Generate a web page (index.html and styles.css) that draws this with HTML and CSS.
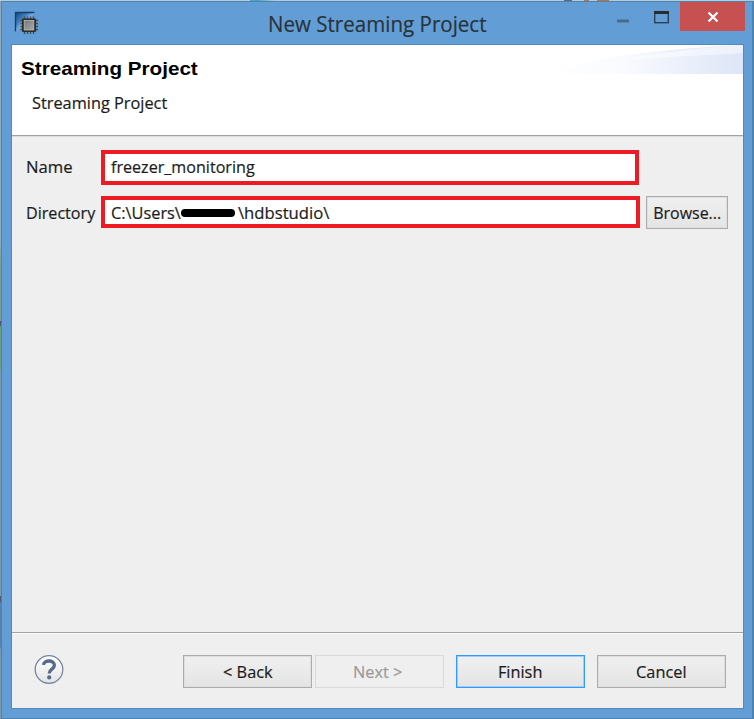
FILE: index.html
```html
<!DOCTYPE html>
<html lang="en">
<head>
<meta charset="utf-8">
<title>New Streaming Project</title>
<link rel="stylesheet" href="styles.css">
</head>
<body>
<div class="desktop">
  <div class="behind-top"></div>
  <div class="behind-left"></div>
  <section class="window">
    <header class="titlebar">
      <svg class="app-icon" width="25" height="25" viewBox="0 0 25 25">
        <defs>
          <linearGradient id="blue" x1="0" y1="0" x2=".6" y2=".6"><stop offset="0" stop-color="#0c3f74"/><stop offset=".55" stop-color="#3f7fbd"/><stop offset="1" stop-color="#a5cdf0"/></linearGradient>
          <linearGradient id="chip" x1="0" y1="0" x2="1" y2="1"><stop offset="0" stop-color="#777"/><stop offset="1" stop-color="#aaa"/></linearGradient>
        </defs>
        <path d="M1 2H21.500L1 22.500Z" fill="url(#blue)"/>
        <path d="M1.500 21.500V2.500H20.500" fill="none" stroke="#123f70" stroke-width="1.300"/>
        <path d="M10.500 6.500V24M13.500 6.500V24M16.500 6.500V24M19.500 6.500V24M6.500 10.500H24M6.500 13.500H24M6.500 16.500H24M6.500 19.500H24" stroke="#454b50" stroke-width="1.300"/>
        <rect x="8" y="8.500" width="14" height="13.500" rx="1" fill="#2c2c2c"/>
        <rect x="10.200" y="10.500" width="9.600" height="9.500" fill="url(#chip)" stroke="#bbb" stroke-width=".8"/>
      </svg>
      <h1 class="title"><span class="t">New Streaming Project</span></h1>
      <div class="controls">
        <svg width="68" height="30" viewBox="0 0 68 30">
          <rect x="5" y="17.500" width="12" height="3" fill="#466d91"/>
          <rect x="42.700" y="9.700" width="13.600" height="11" fill="none" stroke="#2b4054" stroke-width="1.400"/>
          <rect x="42" y="9" width="15" height="3" fill="#272c30"/>
        </svg>
        <span class="close"><svg width="65" height="29" viewBox="0 0 65 29"><path d="M28.500 10.500L37.500 19.500M37.500 10.500L28.500 19.500" stroke="#fff" stroke-width="2.300"/></svg></span>
      </div>
    </header>
    <main class="client">
      <div class="banner">
        <h2 class="heading"><span class="t">Streaming Project</span></h2>
        <p class="sub"><span class="t">Streaming Project</span></p>
        <svg class="swoosh" width="200" height="29" viewBox="0 0 200 29">
          <defs><linearGradient id="haze"><stop offset="0" stop-color="#fff"/><stop offset=".4" stop-color="#f9fbfe"/><stop offset="1" stop-color="#dde5f7"/></linearGradient></defs>
          <path d="M0 29Q75 5 200 0V29Z" fill="url(#haze)"/>
          <path d="M70 16Q140 4 200 0V8Q140 11 70 16Z" fill="#fff" opacity=".45"/>
        </svg>
      </div>
      <form class="form">
        <div class="row name-row">
          <label class="label"><span class="t name">Name</span></label>
          <div class="field"><span class="t file">freezer_monitoring</span></div>
        </div>
        <div class="row dir-row">
          <label class="label"><span class="t directory">Directory</span></label>
          <div class="field"><span class="t users">C:\Users\</span><i class="redaction"></i><span class="t studio">\hdbstudio\</span></div>
          <span class="button browse"><span class="t">Browse...</span></span>
        </div>
      </form>
      <footer class="footer">
        <svg class="help" width="30" height="30" viewBox="0 0 30 30">
          <defs><linearGradient id="ball" x2="0" y2="1"><stop offset="0" stop-color="#fff"/><stop offset="1" stop-color="#e4e4e6"/></linearGradient></defs>
          <circle cx="15" cy="14.500" r="13.800" fill="url(#ball)" stroke="#7486a0" stroke-width="1.300"/>
          <path d="M9.500 9.800C10 4.700 20.300 4.600 20.400 10.200C20.400 14.300 15.200 14 15.200 18.500" fill="none" stroke="#566b8c" stroke-width="3.300"/>
          <circle cx="15.200" cy="22.400" r="2.100" fill="#566b8c"/>
        </svg>
        <span class="button back"><span class="t">&lt; Back</span></span>
        <span class="button next"><span class="t">Next &gt;</span></span>
        <span class="button finish"><span class="t">Finish</span></span>
        <span class="button cancel"><span class="t">Cancel</span></span>
      </footer>
    </main>
  </section>
</div>
</body>
</html>
```
FILE: styles.css
```css
* { box-sizing: border-box; }
body { margin: 0; font: 17px/24px "Open Sans", "Noto Sans", sans-serif; color: #1c1c1c; overflow: hidden; }
h1, h2, p { margin: 0; font-weight: 400; }
.desktop { width: 754px; height: 719px; display: grid; grid-template: 1px 718px / 1px 753px; background: #b7c9d5; }
.behind-top { grid-column: 1 / 3; background: linear-gradient(90deg, #b7cbd6 250px, #42a8c2 250px 258px, #b7cbd6 275px 564px, #5c6875 564px 572px, #b7cbd6 572px 584px, #b87542 584px 589px, #b7cbd6 589px 597px, #b87542 597px 609px, #b7cbd6 609px); }
.behind-left { background: linear-gradient(#8fa9b9 240px, #7d9f92 260px 320px, #514f78 320px 324px, #6b9f7d 326px 368px, #7899b0 370px 595px, #5a5269 595px 600px, #5780ad 602px 645px, #7899ad 649px); }
.window { background: #629ed5; border: 1px solid #4e82b0; border-right-width: 2px; padding: 0 9px 10px 10px; display: flex; flex-direction: column; }
.titlebar { height: 43px; display: flex; margin-right: -9px; flex: none; }
.app-icon { margin: 8px 0 0 2px; flex: none; }
.title { width: 573px; flex: none; padding: 5px 0 0 229px; font-size: 22px; line-height: 32px; color: #29333c; }
.title .t { transform: scaleX(.934); }
.controls { display: flex; flex: none; }
.close { width: 65px; height: 29px; background: #c75050; }
.close svg, .controls svg { display: block; }
.client { flex: 1; background: #efefef; outline: 1px solid #5489bb; display: flex; flex-direction: column; }
.banner { height: 91px; background: #fff; border-bottom: 1px solid #a2a2a2; box-shadow: 0 1px #dcdcdc; position: relative; padding: 11px 0 0 9px; flex: none; }
.heading { font: bold 19px/26px "Liberation Sans", Arial, sans-serif; color: #000; }
.heading .t { transform: scaleX(1.087); -webkit-text-stroke: 0; }
.sub { margin: 9px 0 0 11px; }
.swoosh { position: absolute; top: 0; right: 0; }
.form { height: 496px; padding-top: 14px; flex: none; }
.row { display: flex; padding-left: 14px; }
.label { width: 75px; padding-top: 5px; flex: none; }
.field { width: 538px; height: 35px; border: 4px solid #ed1c24; background: #fff; padding: 1px 0 0 6px; display: flex; }
.name-row { height: 46px; }
.dir-row .field { width: 539px; height: 32px; padding-top: 1px; }
.users { width: 70px; }
.redaction { width: 54px; height: 8px; border-radius: 4px; background: #000; margin: 8px 3px 0 0; }
.t { display: inline-block; white-space: pre; transform-origin: 0 50%; flex: none; -webkit-text-stroke: .2px; }
.sub .t, .users { transform: scaleX(.96); }
.studio { transform: scaleX(.98); }
.file, .directory { transform: scaleX(.948); }
.name { transform: scaleX(.98); }
.button { height: 33px; width: 129px; border: 1px solid #acacac; outline: 1px solid #dedede; outline-offset: -2px; background: linear-gradient(#f0f0f0, #e4e4e4); display: flex; justify-content: center; align-items: center; flex: none; }
.button .t { transform: scaleX(.96); transform-origin: 50% 50%; }
.browse { width: 82px; margin-left: 6px; }
.browse .t { transform: scaleX(.94); }
.footer { flex: 1; display: flex; border-top: 1px solid #a2a2a2; box-shadow: inset 0 1px #fbfbfb; padding: 22px 0 0 22px; }
.help { margin-right: 119px; flex: none; }
.next { margin-left: 3px; color: #9a9a9a; border-color: #dadada; background: #efefef; outline-color: #eee; padding-right: 3px; }
.finish { margin-left: 12px; border-color: #3399ff; outline-color: #9cceff; }
.cancel { margin-left: 12px; }
```
